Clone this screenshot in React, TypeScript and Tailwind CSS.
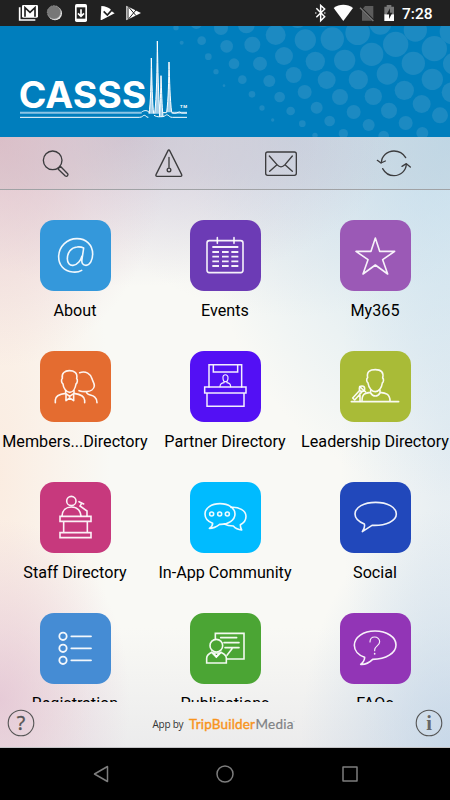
import type { ReactNode } from "react";

type Tile = { label: string; color: string; icon: ReactNode };

// Header dots: [cx, cy, r]
const DOTS = [
  [528, 5, 8], [589, -8, 17], [663, 6, 21], [545, 50, 6], [605, 44, 13], [625, 92, 10],
  [648, 137, 8], [672, 179, 4], [739, -3, 25], [680, 61, 19], [757, 56, 24], [702, 113, 16],
  [780, 113, 21], [827, 27, 30], [852, 90, 27], [727, 161, 13], [808, 165, 18], [881, 147, 24],
  [916, 42, 32], [946, 106, 29], [756, 205, 10], [839, 213, 16], [914, 198, 21], [980, 162, 27],
  [997, 39, 35], [1034, 103, 32], [786, 246, 8], [872, 255, 13], [950, 245, 18], [1020, 213, 24],
  [1075, 161, 29], [1073, 20, 37], [1115, 85, 35], [818, 282, 5], [907, 293, 10], [989, 285, 16],
  [1061, 258, 21], [1120, 211, 26], [1162, 144, 32], [1141, -7, 33], [1187, 55, 38], [1246, 12, 35],
  [1240, 112, 35], [1213, 193, 29], [1167, 254, 24], [1106, 297, 18], [1030, 323, 14], [945, 328, 8],
  [1217, 291, 21], [1265, 234, 27], [1297, 160, 32], [1303, 68, 38], [1320, 268, 24], [1267, 321, 18],
  [1151, 330, 16], [1362, 113, 33], [1357, 17, 38], [1355, 199, 30], [893, -22, 28], [968, -27, 30],
];

const TILES: Tile[] = [
  {
    label: "About",
    color: "bg-[#3498db]",
    icon: (
      <path d="M125 151c-8 5-18 6-27 5-25-2-43-20-42-48 2-30 25-52 55-52 27 0 47 18 47 46 0 18-8 33-20 34-10 0-14-8-12-18l5-34c-6-3-13-4-20-3-18 2-29 17-29 35 0 13 7 21 17 20 14-1 24-16 27-28" />
    ),
  },
  {
    label: "Events",
    color: "bg-[#6c3bb5]",
    icon: (
      <>
        <rect x="51" y="62" width="108" height="96" rx="7" />
        <path d="M82 53v17M132 53v17" />
        <path
          strokeWidth="5.5"
          strokeLinecap="butt"
          d="M67 81h78M67 96h20M96 96h20M124 96h21M67 110h20M96 110h20M124 110h21M67 124h20M96 124h20M124 124h21M67 138h20M96 138h20M124 138h21"
        />
      </>
    ),
  },
  {
    label: "My365",
    color: "bg-[#9b59b6]",
    icon: <path d="m106 54 13 40h45l-36 25 15 43-37-27-37 27 15-43-36-25h45z" />,
  },
  {
    label: "Members...Directory",
    color: "bg-[#e46c30]",
    icon: (
      <>
        <path d="M67 82c-3-16 8-23 21-23s26 5 22 24c4 3 2 13-2 16-2 13-9 25-19 25s-19-12-20-25c-5-3-6-14-2-17z" />
        <path d="M46 155v-8c0-14 16-18 31-20v-8M134 155v-7c0-15-17-19-32-21v-8M77 127l12 9 13-9M78 131v18l11-8 12 8v-18" />
        <path d="M119 65c19-6 33 4 37 18 2 9 8 14 7 22-1 9-11 16-23 17-8 0-16 0-23-3M140 122c-3 16 31 3 31 33" />
      </>
    ),
  },
  {
    label: "Partner Directory",
    color: "bg-[#5310f4]",
    icon: (
      <g strokeLinejoin="miter" strokeWidth="4.5">
        <path d="M57 108V41h98v67M70 41v22h73V41" />
        <path d="M44 108h124v18H44zM51 126v40h111v-40" />
        <path strokeWidth="3.5" d="M99 81c-2-13 16-13 15 0 0 7-4 11-8 11s-7-4-7-11zM90 107c0-9 5-11 12-12v-4M122 107c0-9-5-11-11-12v-4" />
      </g>
    ),
  },
  {
    label: "Leadership Directory",
    color: "bg-[#a9bb37]",
    icon: (
      <>
        <path d="M83 80c-4-19 7-24 23-24 17 0 26 7 22 25 4 3 3 12-1 15-2 15-11 26-21 26s-20-11-22-26c-5-3-5-13-1-16z" />
        <path d="M66 150c0-22 9-24 26-26v-6M150 150c0-22-14-24-30-26v-6M92 126c7 12 21 12 28 0M34 152h142" />
        <path d="m38 141 20-22M44 147l21-23M38 141l6 6M60 126v25" />
        <circle cx="66" cy="113" r="8" />
        <path d="m59 107 14 13M74 120l3 3" />
      </>
    ),
  },
  {
    label: "Staff Directory",
    color: "bg-[#c7397d]",
    icon: (
      <g strokeLinejoin="miter">
        <circle cx="94" cy="57" r="14" />
        <path d="M66 102c1-17 12-27 28-27s27 10 29 27M117 59l14 7M125 64l-5 8 21 15v15" />
        <path d="M60 103h93v15H60zM71 118v34M142 118v34M60 152h93v15H60z" />
      </g>
    ),
  },
  {
    label: "In-App Community",
    color: "bg-[#00bbff]",
    icon: (
      <>
        <path d="M68 124c-16-6-23-16-23-28 0-18 19-31 45-31s45 13 45 31-20 32-46 31c-9 7-18 12-31 12 7-4 10-9 10-15z" />
        <path d="M123 76c23-2 45 9 45 27 0 11-6 20-17 25 0 7 1 11 4 16-12-1-19-5-25-12-11 0-20-2-27-6" />
        <circle cx="65" cy="96" r="6" />
        <circle cx="89" cy="96" r="6" />
        <circle cx="112" cy="96" r="6" />
      </>
    ),
  },
  {
    label: "Social",
    color: "bg-[#2148bb]",
    icon: (
      <path d="M73 126c-17-7-28-17-28-30 0-20 27-35 62-35s62 15 62 35-30 36-73 34l-29 19c6-8 8-15 6-23z" />
    ),
  },
  {
    label: "Registration",
    color: "bg-[#458cd4]",
    icon: (
      <g strokeWidth="5.5">
        <circle cx="69" cy="70" r="11" />
        <circle cx="69" cy="106" r="11" />
        <circle cx="69" cy="142" r="11" />
        <path d="M94 70h59M94 106h59M94 142h59" />
      </g>
    ),
  },
  {
    label: "Publications",
    color: "bg-[#4ba534]",
    icon: (
      <g strokeLinejoin="miter">
        <path d="M76 77V61h86v77h-51" />
        <path d="M92 74h48M102 89h45M105 104h42M126 107l-15 20" />
        <circle cx="79" cy="98" r="19" />
        <path d="M50 150v-14c0-9 7-14 15-18l14 14 14-14c8 4 16 7 16 17v15z" />
        <path d="m71 120 8 11 9-11z" />
      </g>
    ),
  },
  {
    label: "FAQs",
    color: "bg-[#9235b6]",
    icon: (
      <>
        <path d="M74 133c-19-6-31-20-31-36 0-25 27-43 62-43s63 18 63 42-30 43-70 43c-9 9-22 16-36 15 8-6 12-12 12-21z" />
        <path strokeWidth="3.5" d="M90 87c0-9 6-15 14-15s15 6 15 14c0 13-15 12-15 25v2" />
        <path strokeWidth="5" d="M104 122v1" />
      </>
    ),
  },
];

const TOOLS: { name: string; icon: ReactNode }[] = [
  {
    name: "Search",
    icon: (
      <>
        <circle cx="44" cy="46" r="28" />
        <path d="m60 72 22 21c5 3 10-2 7-7L67 64z" />
      </>
    ),
  },
  {
    name: "Alerts",
    icon: (
      <>
        <path d="M51 17c1-3 4-3 5 0l36 72c1 3 0 5-3 5H18c-3 0-4-2-3-5zM54 37v30" />
        <circle cx="54" cy="75" r="5.5" />
      </>
    ),
  },
  {
    name: "Messages",
    icon: (
      <>
        <rect x="8" y="21" width="92" height="70" rx="6" />
        <path d="m19 33 23 26c8 9 16 9 24 0l22-26M20 79l22-20M88 79 66 59" />
      </>
    ),
  },
  {
    name: "Refresh",
    icon: (
      <>
        <path d="M16 53c1-20 18-35 38-35 14 0 27 7 35 20M20 71c7 13 20 21 34 21 20 0 36-15 37-34" />
        <path d="m4 46 11 8 13-6M78 64l13-8 12 10" />
      </>
    ),
  },
];

function StatusBar() {
  return (
    <div className="flex h-[26px] shrink-0 items-center justify-between bg-[#212121] pr-[18px] text-white">
      <svg className="h-[26px] w-[150px]" viewBox="0 0 450 78" fill="none">
        <path d="M59 22v38h47" stroke="#fff" strokeWidth="5" />
        <rect x="66" y="15" width="48" height="38" rx="4" fill="#fff" />
        <path d="M75 50V23l15 14 15-14v27" stroke="#212121" strokeWidth="5" />
        <circle cx="165" cy="40" r="21" fill="#e8e8e8" />
        <circle cx="162" cy="37" r="20" fill="#777" stroke="#9a9a9a" strokeWidth="3" strokeDasharray="3 2" />
        <rect x="225" y="12" width="36" height="54" rx="5" fill="#fff" />
        <path d="M230 22h26v34h-26z" fill="#212121" />
        <path d="M243 28v20m-9-8 9 9 9-9" stroke="#fff" strokeWidth="5" />
        <path d="M304 18c13 1 19 4 26 8l8 10 6 4-39 20c-3 0-4-1-3-4z" fill="#fff" />
        <path d="m311 34 11 11 18-20" stroke="#212121" strokeWidth="5" />
        <path d="m379 17 44 22-44 22z" fill="#fff" />
        <path d="m384 19 24 28M384 59l24-29M384 22v34" stroke="#212121" strokeWidth="3" />
      </svg>
      <div className="flex items-center">
        <svg className="h-[26px] w-[88px]" viewBox="258 0 264 78" fill="none">
          <path d="m274 25 25 25-12 12V16l12 11-25 25" stroke="#fff" strokeWidth="4.5" />
          <path d="M271 39h3M298 39h3" stroke="#fff" strokeWidth="4" />
          <path d="M326 24c17-13 41-13 58 0l-29 39z" fill="#fff" />
          <path d="M420 18h25v44h-34V29z" fill="#5c5c5c" />
          <path d="m405 21 40 40" stroke="#212121" strokeWidth="7" />
          <path d="m405 23 40 40" stroke="#777" strokeWidth="4" />
          <path d="M478 20h7v-5h14v5h8v24h-29z" fill="#777" />
          <path d="M478 43h29v20h-29z" fill="#fff" />
          <path d="m495 25-10 18h7v14l10-19h-7z" fill="#212121" />
        </svg>
        <span className="w-[33px] pt-[2px] pl-[3px] text-[15.5px] leading-6 font-medium whitespace-nowrap">
          7:28
        </span>
      </div>
    </div>
  );
}

function Header() {
  return (
    <header className="h-[111px] shrink-0 bg-[#007ebd]">
      <svg className="h-full w-full" viewBox="0 0 1350 333">
        {DOTS.map(([cx, cy, r], i) => (
          <circle key={i} cx={cx} cy={cy} r={r} fill="#1c8ac2" />
        ))}
        <text
          x="56"
          y="247"
          fill="#fff"
          fontSize="109"
          fontWeight="700"
          textLength="383"
          lengthAdjust="spacingAndGlyphs"
          className="font-['Inter',sans-serif]"
        >
          CASSS
        </text>
        {/* Chromatogram peaks */}
        <g fill="#a5d0ea" stroke="#fff" strokeWidth="3" strokeLinejoin="round">
          <path d="M447 263c5-32 6-90 7-167 2 77 3 135 7 167" />
          <path d="M464 263c6-50 7-130 8-218 2 88 3 168 8 218" />
          <path d="M478 272c3-35 4-70 5-123 2 53 3 88 6 123" />
          <path d="M500 259c5-40 6-90 7-151 2 61 3 111 8 151" />
        </g>
        <g fill="none" stroke="#fff" strokeWidth="3">
          <path stroke="#8cc5e5" strokeWidth="6" d="M60 260h365M515 260h46" />
          <path d="M60 274h358c10 0 10-6 15-6s5 6 12 6M425 258c8-6 18-6 24 3M462 268c10 6 16 4 25 4s10-8 16-5 6 7 14 7h44M488 260h12M515 260c12 5 18-2 24-2l6 3h16" />
        </g>
        <text x="540" y="247" fill="#fff" fontSize="13" fontWeight="700" textLength="21">
          TM
        </text>
      </svg>
    </header>
  );
}

function Toolbar() {
  return (
    <div className="grid h-[53px] shrink-0 grid-cols-4 items-center border-b border-[#a0a2a5] bg-[#333355]/5">
      {TOOLS.map((tool) => (
        <button key={tool.name} aria-label={tool.name} className="flex justify-center">
          <svg
            className="h-9 w-9"
            viewBox="0 0 108 108"
            fill="none"
            stroke="#3c3c3e"
            strokeWidth="4"
            strokeLinecap="round"
            strokeLinejoin="round"
          >
            {tool.icon}
          </svg>
        </button>
      ))}
    </div>
  );
}

function Footer() {
  return (
    <footer className="flex h-[46px] shrink-0 items-start justify-between border-b border-[#c4c4c6] px-[7px] pt-[7px]">
      <svg className="h-[28px] w-[28px]" viewBox="0 0 28 28">
        <circle cx="14" cy="14" r="12.8" fill="none" stroke="#555" strokeWidth="1.1" />
        <text x="14" y="21" textAnchor="middle" fontSize="19.5" fill="#555" stroke="#555" strokeWidth="0.3" className="font-['Noto_Sans',sans-serif]">
          ?
        </text>
      </svg>
      <svg className="h-[28px] w-[150px]" viewBox="0 0 150 28">
        <text x="2.5" y="18.5" fontSize="10" textLength="31" fill="#333" className="font-['Open_Sans',sans-serif]">
          App by
        </text>
        <text x="39" y="20" fontSize="13.5" textLength="66" fill="#f8941d" stroke="#f8941d" strokeWidth="0.4" className="font-['Lato',sans-serif]">
          TripBuilder
        </text>
        <text x="105.5" y="20" fontSize="13.5" textLength="38" fill="#808285" stroke="#808285" strokeWidth="0.2" className="font-['Lato',sans-serif]">
          Media
        </text>
        <text x="143" y="14" fontSize="3" fill="#808285">
          ™
        </text>
      </svg>
      <svg className="h-[28px] w-[28px]" viewBox="0 0 28 28">
        <circle cx="14" cy="14" r="12.8" fill="none" stroke="#555" strokeWidth="1.1" />
        <text x="14" y="21" textAnchor="middle" fontSize="20.5" fontWeight="700" fill="#666" className="font-['Liberation_Serif',serif]">
          i
        </text>
      </svg>
    </footer>
  );
}

function NavBar() {
  return (
    <nav className="grid h-[52px] shrink-0 grid-cols-[37px_1fr_1fr_1fr_37px] items-center bg-black text-[#7d7d7d]">
      <span />
      {["M19.5 4.5v15L6.5 12z", "M12 4a8 8 0 1 1 0 16 8 8 0 0 1 0-16z", "M5 5h14v14H5z"].map((d) => (
        <svg key={d} className="mx-auto h-6 w-6" viewBox="0 0 24 24" fill="none" stroke="currentColor" strokeWidth="1.5" strokeLinejoin="round">
          <path d={d} />
        </svg>
      ))}
    </nav>
  );
}

export default function App() {
  return (
    <div className="flex h-[800px] w-[450px] flex-col overflow-hidden bg-black font-['Roboto',sans-serif]">
      <StatusBar />
      <Header />
      <main className="flex min-h-0 flex-1 flex-col bg-[#f9f9f5] bg-[radial-gradient(ellipse_170px_230px_at_0%_0%,rgba(226,190,200,0.75),transparent),radial-gradient(ellipse_270px_150px_at_28%_0%,rgba(202,192,212,0.65),transparent),radial-gradient(ellipse_260px_360px_at_100%_0%,rgba(188,218,236,0.75),transparent),radial-gradient(ellipse_220px_180px_at_65%_0%,rgba(214,218,228,0.7),transparent),radial-gradient(ellipse_130px_180px_at_0%_92%,rgba(224,188,208,0.7),transparent),radial-gradient(ellipse_110px_460px_at_0%_55%,rgba(252,228,212,0.6),transparent),radial-gradient(ellipse_150px_240px_at_100%_100%,rgba(186,208,230,0.7),transparent),radial-gradient(ellipse_110px_450px_at_100%_50%,rgba(218,230,240,0.65),transparent),linear-gradient(to_top,rgba(232,232,234,0.8),transparent_120px)]">
        <Toolbar />
        <div className="grid min-h-0 flex-1 auto-rows-[131px] grid-cols-3 overflow-hidden pt-[30px]">
          {TILES.map((tile) => (
            <div key={tile.label} className="flex flex-col items-center">
              <div className={`h-[71px] w-[71px] shrink-0 rounded-[14px] ${tile.color}`}>
                <svg
                  className="h-full w-full"
                  viewBox="0 0 213 213"
                  fill="none"
                  stroke="#fff"
                  strokeOpacity="0.93"
                  strokeWidth="4.8"
                  strokeLinecap="round"
                  strokeLinejoin="round"
                >
                  {tile.icon}
                </svg>
              </div>
              <span className="mt-[10px] text-[16.15px] leading-5 whitespace-nowrap text-black">{tile.label}</span>
            </div>
          ))}
        </div>
        <Footer />
      </main>
      <NavBar />
    </div>
  );
}
